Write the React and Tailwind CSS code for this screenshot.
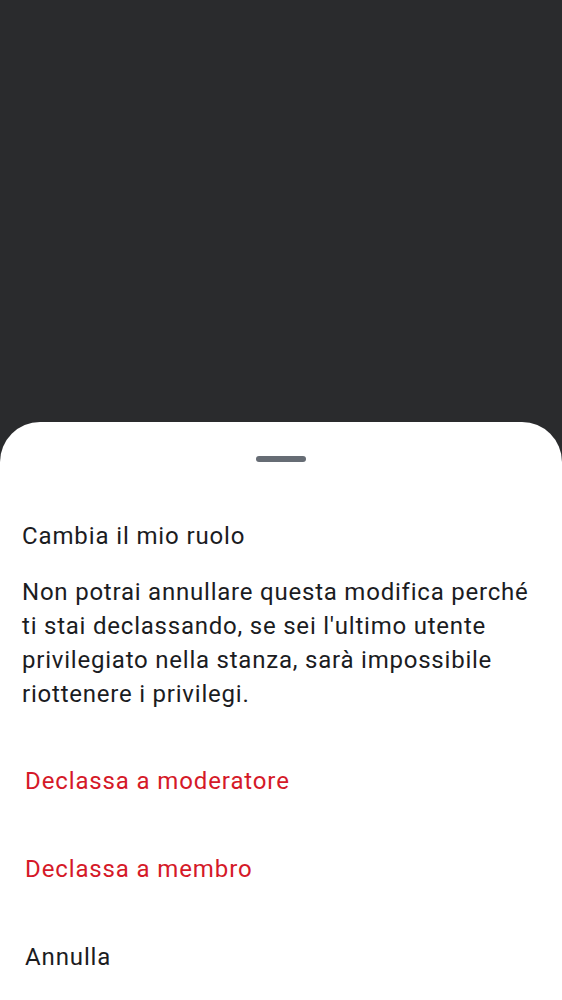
import React from "react";

export default function App() {
    return (
        <div
            className="w-[562px] h-[1000px] bg-[#2a2b2d] flex flex-col overflow-hidden"
            style={{ fontFamily: "Roboto, 'Noto Sans', sans-serif" }}
        >
            <div className="h-[422px] shrink-0" />
            <div className="flex-1 bg-white rounded-t-[40px] flex flex-col">
                {/* drag handle */}
                <div className="flex justify-center pt-[34px]">
                    <div className="w-[50px] h-[6px] rounded-full bg-[#666c74]" />
                </div>

                <div className="px-[22px] pt-[58px]">
                    <h2 className="text-[24px] leading-[32px] tracking-[0.875px] text-[#1b1c1f]">
                        Cambia il mio ruolo
                    </h2>
                    <p className="mt-[23px] text-[24px] leading-[34px] tracking-[0.78px] text-[#1b1c1f]">
                        Non potrai annullare questa modifica perché ti stai declassando, se sei l'ultimo utente privilegiato nella stanza, sarà impossibile riottenere i privilegi.
                    </p>
                </div>

                <div className="mt-[26px] flex flex-col">
                    <button className="h-[88px] px-[25px] text-left text-[24px] tracking-[0.875px] text-[#d51928]">
                        Declassa a moderatore
                    </button>
                    <button className="h-[88px] px-[25px] text-left text-[24px] tracking-[0.875px] text-[#d51928]">
                        Declassa a membro
                    </button>
                    <button className="h-[88px] px-[25px] text-left text-[24px] tracking-[0.875px] text-[#1b1c1f]">
                        Annulla
                    </button>
                </div>
            </div>
        </div>
    );
}
